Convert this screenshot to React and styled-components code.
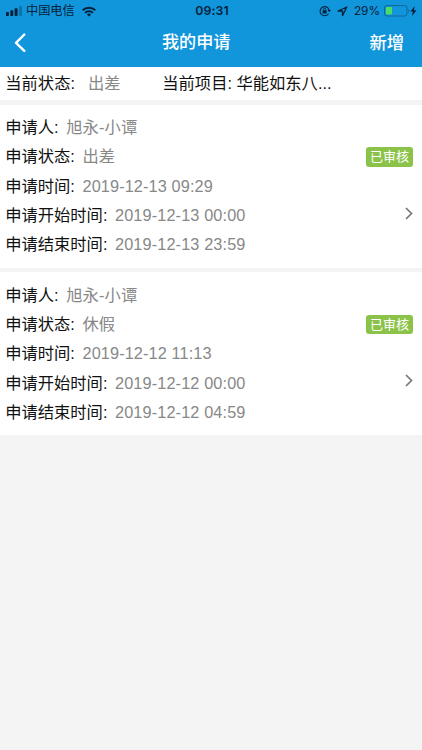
import React from 'react';
import styled, { createGlobalStyle } from 'styled-components';

const GlobalStyle = createGlobalStyle`
  * {
    box-sizing: border-box;
  }

  body {
    margin: 0;
    background: #f4f4f4;
    font-family: 'Liberation Sans', 'Noto Sans CJK SC', sans-serif;
  }
`;

const Screen = styled.div`
  min-height: 750px;
  overflow: hidden;
  background: #f4f4f4;
`;

const Header = styled.header`
  height: 67px;
  background: #1296db;
`;

const StatusBar = styled.div`
  display: grid;
  grid-template-columns: 1fr auto 1fr;
  align-items: center;
  height: 22px;
  padding: 0 5px 0 6px;
  color: #06213a;
  font-size: 12.2px;
  line-height: 22px;
`;

const StatusGroup = styled.div`
  display: flex;
  align-items: center;
  justify-content: ${props => props.$end ? 'flex-end' : 'flex-start'};
`;

const Carrier = styled.span`
  margin: 0 7px 0 4px;
`;

const Clock = styled.span`
  margin-left: 1px;
  font-family: Inter, 'Liberation Sans', sans-serif;
  font-size: 12.3px;
  font-weight: 600;
  letter-spacing: 0.1px;
`;

const Percent = styled.span`
  margin: 0 4px 0 6px;
  font-family: Inter, 'Liberation Sans', sans-serif;
  font-size: 11.8px;
`;

const NavBar = styled.nav`
  display: grid;
  grid-template-columns: 148px 1fr auto;
  align-items: center;
  height: 42px;
  padding: 0 18px 0 14px;
  color: #fff;
`;

const NavButton = styled.button`
  display: flex;
  justify-self: ${props => props.$end ? 'end' : 'start'};
  padding: 0;
  border: none;
  background: none;
  color: inherit;
  font-family: inherit;
  font-size: 17.3px;
  font-weight: 500;
  line-height: 24px;
`;

const Title = styled.h1`
  margin: 0;
  font-size: 17.1px;
  font-weight: 500;
  line-height: 24px;
`;

const Summary = styled.section`
  display: flex;
  align-items: center;
  height: 33px;
  padding-left: 5.3px;
  background: #fff;
  font-size: 16.3px;
  line-height: 29px;
  white-space: nowrap;
`;

const SummaryItem = styled.div`
  width: ${props => props.$width};
`;

const Label = styled.span`
  margin-right: ${props => props.$gap || '7.6px'};
  color: #111;
`;

const Value = styled.span`
  color: #888;
  letter-spacing: 0.12px;
`;

const Card = styled.article`
  display: flex;
  height: 163px;
  margin-top: 4.6px;
  padding: 8.5px 9px 7px 5.2px;
  background: #fff;
`;

const Fields = styled.div`
  flex: 1;
`;

const Field = styled.div`
  height: 29.3px;
  font-size: 16.3px;
  line-height: 29.3px;
  white-space: nowrap;
`;

const Aside = styled.div`
  display: flex;
  flex-direction: column;
  align-items: flex-end;
  padding-top: 34px;
`;

const Badge = styled.span`
  height: 19.6px;
  padding: 0 4px;
  border-radius: 3px;
  background: #8bc34a;
  color: #fff;
  font-size: 13px;
  line-height: 19.6px;
`;

const Arrow = styled.svg`
  margin-top: 40.2px;
`;

const LocationArrow = styled.svg`
  margin-left: 6px;
`;

const applications = [
  {
    id: 1,
    fields: [
      ['申请人', '旭永-小谭'],
      ['申请状态', '出差'],
      ['申请时间', '2019-12-13 09:29'],
      ['申请开始时间', '2019-12-13 00:00'],
      ['申请结束时间', '2019-12-13 23:59'],
    ],
  },
  {
    id: 2,
    fields: [
      ['申请人', '旭永-小谭'],
      ['申请状态', '休假'],
      ['申请时间', '2019-12-12 11:13'],
      ['申请开始时间', '2019-12-12 00:00'],
      ['申请结束时间', '2019-12-12 04:59'],
    ],
  },
];

const SignalIcon = () => (
  <svg width="16" height="10" viewBox="0 0 16 10" fill="currentColor">
    <rect x="0" y="6" width="3" height="4" rx="0.8" />
    <rect x="4.3" y="4.2" width="3" height="5.8" rx="0.8" />
    <rect x="8.6" y="2.2" width="3" height="7.8" rx="0.8" />
    <rect x="13" y="0" width="3" height="10" rx="0.8" opacity="0.3" />
  </svg>
);

const WifiIcon = () => (
  <svg width="14" height="11" viewBox="0 0 14 11" fill="none" stroke="currentColor" strokeWidth="2">
    <path d="M0.7 4.2a9 9 0 0 1 12.6 0" />
    <path d="M3.1 6.9a5.5 5.5 0 0 1 7.8 0" />
    <path d="M7 10.6L4.9 8.5a3 3 0 0 1 4.2 0z" fill="currentColor" stroke="none" />
  </svg>
);

const RotationLockIcon = () => (
  <svg width="12" height="12" viewBox="0 0 12 12" fill="none" stroke="currentColor">
    <path d="M9.5 8.8A4.6 4.6 0 1 1 10.2 5.3" strokeWidth="1.1" />
    <path d="M8.5 5.1h3.4l-1.7 2.2z" fill="currentColor" stroke="none" />
    <rect x="3.6" y="5.3" width="4" height="3.2" rx="0.4" fill="currentColor" stroke="none" />
    <path d="M4.4 5.5V4.5a1.2 1.2 0 0 1 2.4 0v1" strokeWidth="0.9" />
  </svg>
);

const LocationIcon = () => (
  <LocationArrow width="11" height="11" viewBox="0 0 11 11" fill="none" stroke="currentColor" strokeWidth="1.3" strokeLinejoin="round">
    <path d="M9.8 1L1 5h4.5v4.6z" />
  </LocationArrow>
);

const BatteryIcon = () => (
  <svg width="26" height="12" viewBox="0 0 26 12">
    <rect x="0.5" y="0.6" width="22.5" height="10.4" rx="2.4" fill="none" stroke="#0d6699" />
    <rect x="2" y="2.1" width="6" height="7.4" rx="0.8" fill="#4cdb64" />
    <path d="M24.2 4v3.8c1.5-.5 1.5-3.3 0-3.8z" fill="#0d6699" />
  </svg>
);

const BoltIcon = () => (
  <svg width="7" height="10" viewBox="0 0 7 10" fill="currentColor">
    <path d="M4.7 0L0.4 5.6h2.5L2 10l4.5-5.8H3.9z" />
  </svg>
);

const BackIcon = () => (
  <svg width="12" height="20" viewBox="0 0 12 20" fill="none" stroke="currentColor" strokeWidth="2.4" strokeLinecap="round" strokeLinejoin="round">
    <path d="M10.3 1.5L2 9.8l8.3 8" />
  </svg>
);

const ApplicationCard = ({ fields }) => (
  <Card>
    <Fields>
      {fields.map(([label, value]) => (
        <Field key={label}>
          <Label>{label}:</Label>
          <Value>{value}</Value>
        </Field>
      ))}
    </Fields>
    <Aside>
      <Badge>已审核</Badge>
      <Arrow width="8" height="13" viewBox="0 0 8 13" fill="none" stroke="#777" strokeWidth="1.7">
        <path d="M1 1l5.5 5.5L1 12" />
      </Arrow>
    </Aside>
  </Card>
);

const App = () => (
  <Screen>
    <GlobalStyle />
    <Header>
      <StatusBar>
        <StatusGroup>
          <SignalIcon />
          <Carrier>中国电信</Carrier>
          <WifiIcon />
        </StatusGroup>
        <Clock>09:31</Clock>
        <StatusGroup $end>
          <RotationLockIcon />
          <LocationIcon />
          <Percent>29%</Percent>
          <BatteryIcon />
          <BoltIcon />
        </StatusGroup>
      </StatusBar>
      <NavBar>
        <NavButton aria-label="返回"><BackIcon /></NavButton>
        <Title>我的申请</Title>
        <NavButton $end>新增</NavButton>
      </NavBar>
    </Header>
    <Summary>
      <SummaryItem $width="157px">
        <Label $gap="13px">当前状态:</Label>
        <Value>出差</Value>
      </SummaryItem>
      <SummaryItem>
        <Label>当前项目: 华能如东八...</Label>
      </SummaryItem>
    </Summary>
    {applications.map(item => (
      <ApplicationCard key={item.id} fields={item.fields} />
    ))}
  </Screen>
);

export default App;
